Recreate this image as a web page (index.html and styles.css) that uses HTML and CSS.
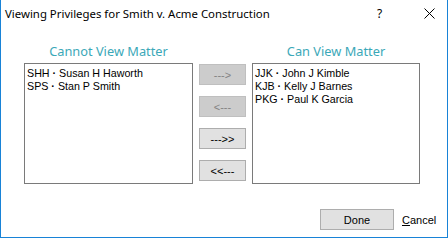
FILE: index.html
```html
<!DOCTYPE html>
<html>
<head>
<meta charset="utf-8">
<link rel="stylesheet" href="styles.css">
</head>
<body>
<div class="window">
  <div class="titlebar">
    <span class="title">Viewing Privileges for Smith v. Acme Construction</span>
    <span class="help">?</span>
    <span class="close"><svg width="11" height="11" viewBox="0 0 11 11"><path d="M0.5 0.5 L10.5 10.5 M10.5 0.5 L0.5 10.5" stroke="#000" stroke-width="1" fill="none"/></svg></span>
  </div>
  <div class="main">
    <div class="heading">Cannot View Matter</div>
    <div></div>
    <div class="heading">Can View Matter</div>
    <div class="listbox">
      <div class="item">SHH <span class="dot">·</span> Susan H Haworth</div>
      <div class="item">SPS <span class="dot">·</span> Stan P Smith</div>
    </div>
    <div class="buttons">
      <button class="btn disabled">---&gt;</button>
      <button class="btn disabled">&lt;---</button>
      <button class="btn">---&gt;&gt;</button>
      <button class="btn">&lt;&lt;---</button>
    </div>
    <div class="listbox">
      <div class="item">JJK <span class="dot">·</span> John J Kimble</div>
      <div class="item">KJB <span class="dot">·</span> Kelly J Barnes</div>
      <div class="item">PKG <span class="dot">·</span> Paul K Garcia</div>
    </div>
  </div>
  <div class="footer">
    <button class="btn done">Done</button>
    <span class="cancel"><u>C</u>ancel</span>
  </div>
</div>
</body>
</html>
```
FILE: styles.css
```css
html, body {
  margin: 0;
  padding: 0;
  background: #ffffff;
}
.window {
  width: 448px;
  height: 238px;
  box-sizing: border-box;
  border: 1px solid #1883d7;
  border-top: none;
  display: flex;
  flex-direction: column;
  background: #ffffff;
}
.titlebar {
  height: 30px;
  display: flex;
  align-items: center;
  padding-left: 4px;
  font-family: "Noto Sans", "Open Sans", sans-serif;
  font-size: 11.4px;
  color: #000;
}
.title {
  flex: 1;
  margin-top: -4px;
}
.help {
  width: 12px;
  margin-right: 35px;
  margin-top: -4px;
  font-size: 12px;
}
.close {
  width: 11px;
  margin-right: 12px;
  display: flex;
  margin-top: -4px;
}
.main {
  display: grid;
  grid-template-columns: 169px 47px 168px;
  grid-template-rows: 20px 121px;
  column-gap: 6px;
  row-gap: 0;
  padding-left: 23px;
  padding-top: 13px;
}
.heading {
  font-family: "Noto Sans", "Open Sans", sans-serif;
  font-size: 12.8px;
  line-height: 16px;
  color: #3ba8b8;
  text-align: center;
}
.listbox {
  border: 1px solid #7a7a7a;
  box-sizing: border-box;
  padding: 3px 2px;
  font-family: "Liberation Sans", Arial, sans-serif;
  font-size: 10.7px;
  line-height: 13px;
  color: #000;
}
.dot {
  font-weight: bold;
}
.buttons {
  display: flex;
  flex-direction: column;
  gap: 11px;
  padding-top: 1px;
}
.btn {
  height: 21px;
  width: 47px;
  margin: 0;
  padding: 0;
  box-sizing: border-box;
  border: 1px solid #adadad;
  background: #e1e1e1;
  font-family: "Liberation Sans", Arial, sans-serif;
  font-size: 11px;
  color: #000;
}
.btn.disabled {
  background: #cccccc;
  border-color: #bfbfbf;
  color: #838383;
}
.footer {
  display: flex;
  align-items: center;
  padding-top: 25px;
  padding-left: 319px;
}
.btn.done {
  width: 74px;
}
.cancel {
  margin-left: 8px;
  font-family: "Liberation Sans", Arial, sans-serif;
  font-size: 11px;
  color: #000;
}
```
